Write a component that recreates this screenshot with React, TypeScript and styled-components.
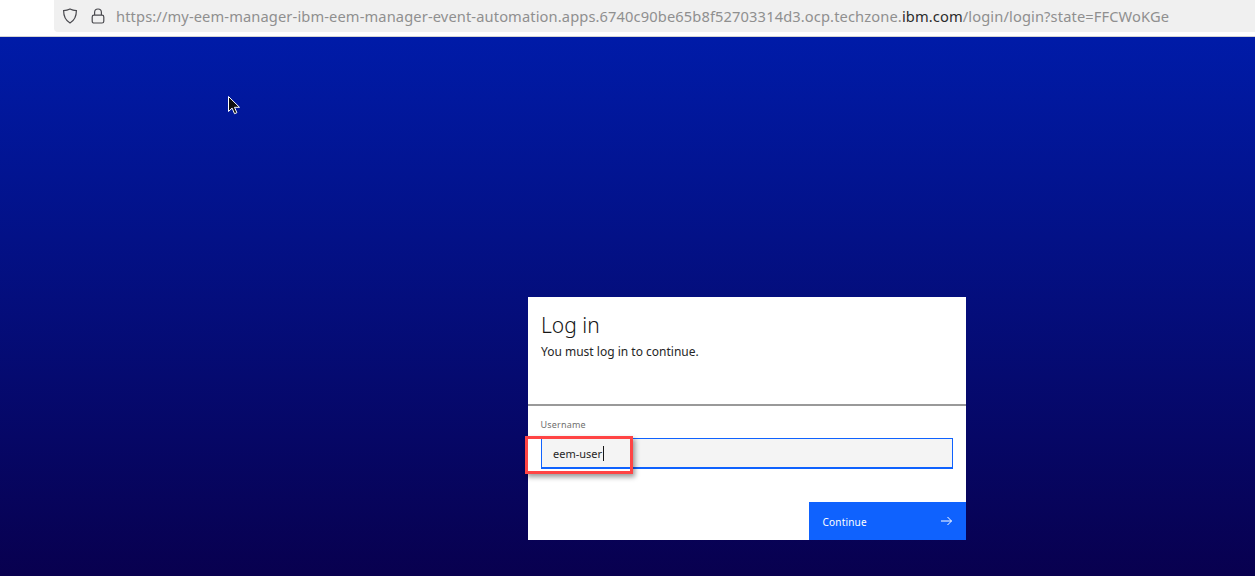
import React from 'react';
import styled, { createGlobalStyle } from 'styled-components';

const GlobalStyle = createGlobalStyle`
  html, body {
    margin: 0;
    padding: 0;
    height: 100%;
    overflow: hidden;
    font-family: "Noto Sans", "Open Sans", sans-serif;
  }
`;

const Page = styled.div`
  width: 1255px;
  height: 576px;
  display: flex;
  flex-direction: column;
  position: relative;
  overflow: hidden;
`;

// Browser chrome
const BrowserBar = styled.header`
  height: 36px;
  flex: none;
  background: #fff;
  border-bottom: 1px solid #d4d4d4;
  padding-left: 54px;
  box-sizing: content-box;
`;

const UrlField = styled.div`
  height: 32px;
  display: flex;
  align-items: center;
  background: #f0f0f0;
  border-radius: 0 0 0 4px;
  padding-left: 8px;
  gap: 12px;
`;

const ChromeIcon = styled.svg`
  flex: none;
  width: 16px;
  height: 16px;
  fill: none;
  stroke: #4a4a4f;
  stroke-width: 1.2;
`;

const UrlText = styled.div`
  font-size: 14.67px;
  letter-spacing: 0.12px;
  margin-left: -2px;
  color: #8f8f8f;
  white-space: nowrap;
`;

const UrlHost = styled.span`
  color: #2b2b2b;
`;

// Login area
const Stage = styled.main`
  flex: 1;
  background: linear-gradient(180deg, #001ba8 0%, #08004f 100%);
  padding: 260px 0 0 528px;
`;

const Card = styled.section`
  width: 438px;
  height: 243px;
  background: #fff;
  display: flex;
  flex-direction: column;
  position: relative;
`;

const CardHead = styled.div`
  height: 109px;
  flex: none;
  box-sizing: border-box;
  padding: 14px 13px 0;
  border-bottom: 2px solid #999;
`;

const Title = styled.h1`
  margin: 0;
  font-size: 21px;
  font-weight: 300;
  line-height: 28px;
  color: #161616;
`;

const Subtitle = styled.p`
  margin: 5px 0 0;
  font-size: 12px;
  line-height: 16px;
  color: #262626;
`;

const Field = styled.div`
  padding: 12px 13px 0;
`;

const Label = styled.label`
  display: block;
  font-size: 9px;
  line-height: 14px;
  letter-spacing: 0.2px;
  color: #6f6f6f;
  margin: 0 0 6px -0.5px;
`;

const InputBox = styled.div`
  height: 31px;
  box-sizing: border-box;
  border: 1px solid #0f62fe;
  border-bottom-width: 2px;
  background: #f4f4f4;
  display: flex;
  align-items: center;
  padding-left: 11px;
  font-size: 11px;
  color: #262626;
`;

const Caret = styled.span`
  display: inline-block;
  width: 1px;
  height: 15px;
  background: #161616;
  margin-left: 1px;
`;

const Actions = styled.div`
  margin-top: auto;
  display: flex;
  justify-content: flex-end;
`;

const ContinueButton = styled.button`
  width: 157px;
  height: 38px;
  border: 0;
  background: #0f62fe;
  color: #fff;
  font: inherit;
  font-size: 10px;
  letter-spacing: 0.2px;
  padding: 2px 14px 0 13.5px;
  display: flex;
  align-items: center;
  justify-content: space-between;
`;

const ArrowIcon = styled.svg`
  width: 12px;
  height: 10px;
  margin-top: -2px;
  fill: none;
  stroke: #fff;
  stroke-width: 1;
`;

// Annotations drawn on top of the screenshot
const Highlight = styled.div`
  position: absolute;
  left: -3px;
  top: 139px;
  width: 108px;
  height: 38px;
  box-sizing: border-box;
  border: 3px solid #f44;
  box-shadow: 2px 3px 5px rgba(0, 0, 0, 0.4);
`;

const Pointer = styled.svg`
  position: absolute;
  left: 227px;
  top: 95px;
  width: 14px;
  height: 21px;
`;

const App: React.FC = () => (
  <Page>
    <GlobalStyle />
    <BrowserBar>
      <UrlField>
        <ChromeIcon viewBox="0 0 16 16">
          <path d="M8 1c2 1 4.200 1.500 6.400 1.600 0 5.700-1.700 9.900-6.400 12.400-4.700-2.500-6.400-6.700-6.400-12.400C3.800 2.500 6 2 8 1z" />
        </ChromeIcon>
        <ChromeIcon viewBox="0 0 16 16">
          <rect x="2.200" y="7.200" width="11.600" height="7.800" rx="1.800" />
          <path d="M4.600 7V4.400a3.400 3.400 0 0 1 6.800 0V7" />
        </ChromeIcon>
        <UrlText>
          https://my-eem-manager-ibm-eem-manager-event-automation.apps.6740c90be65b8f52703314d3.ocp.techzone.
          <UrlHost>ibm.com</UrlHost>/login/login?state=FFCWoKGe
        </UrlText>
      </UrlField>
    </BrowserBar>
    <Stage>
      <Card>
        <CardHead>
          <Title>Log in</Title>
          <Subtitle>You must log in to continue.</Subtitle>
        </CardHead>
        <Field>
          <Label>Username</Label>
          <InputBox>
            eem-user
            <Caret />
          </InputBox>
        </Field>
        <Actions>
          <ContinueButton type="button">
            Continue
            <ArrowIcon viewBox="0 0 12 10">
              <path d="M1 5h10.500M7.500 1l4 4-4 4" />
            </ArrowIcon>
          </ContinueButton>
        </Actions>
        <Highlight />
      </Card>
    </Stage>
    <Pointer viewBox="0 0 14 21">
      <path d="M1.500 1.500v15l3.600-3.400 2.400 5.600 2.400-1-2.400-5.400h5z" fill="#111" stroke="#fff" strokeWidth="1" />
    </Pointer>
  </Page>
);

export default App;
